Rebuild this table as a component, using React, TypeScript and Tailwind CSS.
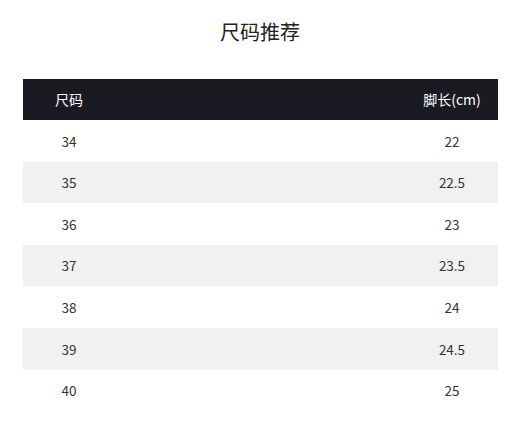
import React from "react";

const rows: [string, string][] = [
  ["34", "22"],
  ["35", "22.5"],
  ["36", "23"],
  ["37", "23.5"],
  ["38", "24"],
  ["39", "24.5"],
  ["40", "25"],
];

export default function App() {
  return (
    <div
      className="w-[520px] h-[433px] bg-white overflow-hidden"
      style={{ fontFamily: '"Noto Sans CJK SC", "Noto Sans", sans-serif' }}
    >
      <div className="h-[79px] pt-[17px] text-center text-[20px] leading-[30px] text-[#222]">
        尺码推荐
      </div>
      <div className="mx-[23px] w-[475px]">
        <div className="h-[41px] bg-[#1a1a23] flex items-center justify-between text-white text-[14px]">
          <div className="w-[92px] text-center">尺码</div>
          <div className="w-[92px] text-center">脚长(cm)</div>
        </div>
        {rows.map(([a, b], i) => (
          <div
            key={a}
            className={`h-[41.6px] flex items-center justify-between text-[13.5px] text-[#333] ${
              i % 2 === 1 ? "bg-[#f1f1f1]" : "bg-white"
            }`}
          >
            <div className="w-[92px] text-center">{a}</div>
            <div className="w-[92px] text-center">{b}</div>
          </div>
        ))}
      </div>
    </div>
  );
}
